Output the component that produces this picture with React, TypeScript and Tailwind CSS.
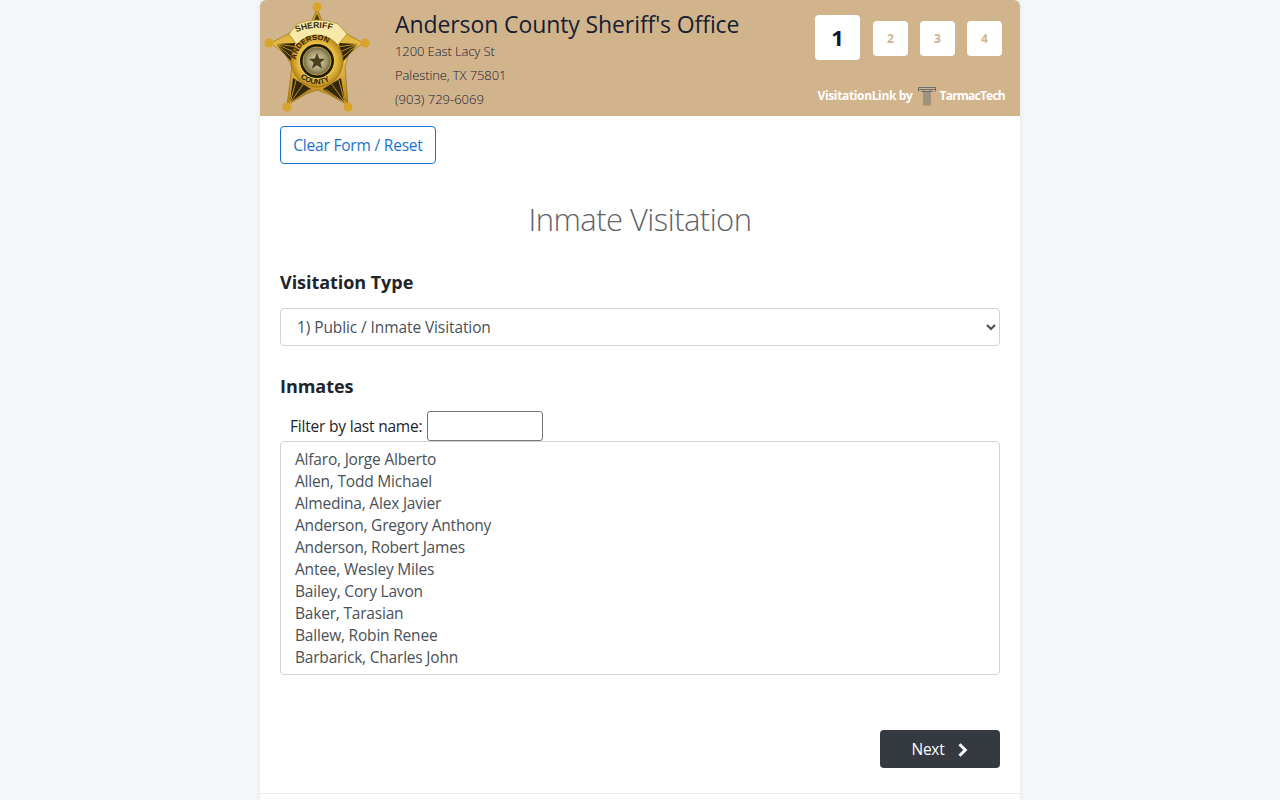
import React from "react";

const font = "font-['Open_Sans',sans-serif]";

const inmates = [
  "Alfaro, Jorge Alberto",
  "Allen, Todd Michael",
  "Almedina, Alex Javier",
  "Anderson, Gregory Anthony",
  "Anderson, Robert James",
  "Antee, Wesley Miles",
  "Bailey, Cory Lavon",
  "Baker, Tarasian",
  "Ballew, Robin Renee",
  "Barbarick, Charles John",
  "Barnes, Larry Joe",
];

const Rays = ({ x, y, angles, len }: { x: number; y: number; angles: number[]; len: number }) => (
  <g stroke="#d9a928" strokeWidth="0.8">
    {angles.map((a) => (
      <line
        key={a}
        x1={x}
        y1={y}
        x2={x + len * Math.cos((a * Math.PI) / 180)}
        y2={y + len * Math.sin((a * Math.PI) / 180)}
      />
    ))}
  </g>
);

const Badge = () => (
  <svg width="108" height="114" viewBox="0 0 108 114" className="shrink-0">
    <defs>
      <radialGradient id="gold" cx="50%" cy="50%" r="55%">
        <stop offset="0%" stopColor="#fff6b8" />
        <stop offset="60%" stopColor="#efc548" />
        <stop offset="100%" stopColor="#a8760f" />
      </radialGradient>
      <linearGradient id="starGold" x1="0" y1="0" x2="0" y2="1">
        <stop offset="0%" stopColor="#c9951f" />
        <stop offset="50%" stopColor="#f0cb55" />
        <stop offset="100%" stopColor="#b07d12" />
      </linearGradient>
      <radialGradient id="seal" cx="50%" cy="50%" r="55%">
        <stop offset="0%" stopColor="#e6dfba" />
        <stop offset="65%" stopColor="#a0956a" />
        <stop offset="100%" stopColor="#5a4f28" />
      </radialGradient>
      <filter id="soft">
        <feGaussianBlur stdDeviation="0.35" />
      </filter>
    </defs>
    <g filter="url(#soft)">
      <path
        d="M55 8 L62 24 L74 27 L101 42 L86 54 L83 66 L86 104 L66 93 L55 89 L44 93 L25 104 L30 66 L24 54 L9 42 L37 27 L48 24 Z"
        fill="url(#starGold)"
        stroke="#8a6410"
        strokeWidth="0.6"
      />
      <path d="M14 43 L33 42 L31 63 Z" fill="#33260a" />
      <path d="M96 43 L77 42 L79 63 Z" fill="#33260a" />
      <path d="M31 77 L49 88 L28 102 Z" fill="#33260a" />
      <path d="M79 77 L61 88 L83 102 Z" fill="#33260a" />
      <path d="M55 13 L60 24 L50 24 Z" fill="#4a3a10" />
      <Rays x={14} y={43} angles={[8, 24, 40]} len={22} />
      <Rays x={96} y={43} angles={[172, 156, 140]} len={22} />
      <Rays x={28} y={102} angles={[-35, -55, -75]} len={24} />
      <Rays x={83} y={102} angles={[-145, -125, -105]} len={24} />
      <circle cx="55" cy="6" r="4.5" fill="#d8a42a" />
      <circle cx="7" cy="42" r="4.5" fill="#d8a42a" />
      <circle cx="103" cy="42" r="4.5" fill="#d8a42a" />
      <circle cx="25" cy="106" r="4.5" fill="#d8a42a" />
      <circle cx="86" cy="106" r="4.5" fill="#d8a42a" />
      <path d="M27 33 L35 23 Q55 15 76 23 L85 33 L76 44 Q55 30 35 44 Z" fill="#f7e9a8" stroke="#a67c14" strokeWidth="0.6" />
      <circle cx="55" cy="60" r="26" fill="url(#gold)" stroke="#9a6f10" strokeWidth="0.8" />
      <circle cx="55" cy="60" r="17" fill="#1f1a0c" />
      <circle cx="55" cy="60" r="14" fill="url(#seal)" stroke="#c9a23a" strokeWidth="1" />
      <path
        d="M55 52 L57.2 57.6 L63 58 L58.5 61.6 L60 67.5 L55 64.2 L50 67.5 L51.5 61.6 L47 58 L52.8 57.6 Z"
        fill="#4a3f1c"
      />
    </g>
    <path id="sheriffArc" d="M33 32 Q55 22 79 32" fill="none" />
    <text fontSize="8.5" fontWeight="700" fill="#3b2a06" fontFamily="'Liberation Sans',sans-serif">
      <textPath href="#sheriffArc" startOffset="3%">SHERIFF</textPath>
    </text>
    <path id="andersonArc" d="M34 60 A21 21 0 0 1 76 60" fill="none" />
    <text fontSize="7.5" fontWeight="700" fill="#2e2105" fontFamily="'Liberation Sans',sans-serif">
      <textPath href="#andersonArc" startOffset="2%">ANDERSON</textPath>
    </text>
    <path id="countyArc" d="M32 66 A24 24 0 0 0 78 66" fill="none" />
    <text fontSize="7.5" fontWeight="700" fill="#2e2105" fontFamily="'Liberation Sans',sans-serif">
      <textPath href="#countyArc" startOffset="20%">COUNTY</textPath>
    </text>
  </svg>
);

const TarmacLogo = () => (
  <svg width="18" height="20" viewBox="0 0 18 20" className="ml-[5px] mr-1">
    <g fill="none" stroke="#6e6e6e" strokeWidth="1">
      <path d="M0.5 1.5 H17.5 M0.5 1.5 V5.5 M17.5 1.5 V5.5 M1 3.5 H17 M3 5.5 H15" />
      <path d="M6 3.5 V19.5 M8 5.5 V19.5 M10 5.5 V19.5 M12 3.5 V19.5" />
    </g>
  </svg>
);

const Step = ({ n }: { n: number }) => (
  <div className="mt-[6px] w-[35px] h-[35px] bg-white rounded flex items-center justify-center text-xs font-bold text-[#d2b48c]">
    {n}
  </div>
);

export default function App() {
  return (
    <div className={`${font} min-h-[800px] h-[800px] overflow-hidden bg-[#f4f8fb] text-[#212529]`}>
      <div className="w-[760px] h-[800px] mx-auto bg-white shadow-[0_0_6px_rgba(0,0,0,0.08)] rounded-t-md">
        <div className="h-[116px] bg-[#d2b48c] rounded-t-md flex relative">
          <div className="w-[135px] pl-[2px] pt-[1px]">
            <Badge />
          </div>
          <div className="text-[#152033]">
            <div className="text-[23px] leading-[30px] pt-[9px] pb-[1px] tracking-[-0.1px]">Anderson County Sheriff's Office</div>
            <div className="text-[13px] leading-6 -mt-[1px] font-light tracking-[-0.1px]">1200 East Lacy St</div>
            <div className="text-[13px] leading-6 font-light tracking-[-0.1px]">Palestine, TX 75801</div>
            <div className="text-[13px] leading-6 font-light">(903) 729-6069</div>
          </div>
          <div className="absolute right-[18px] top-[15px] flex items-start gap-3">
            <div className="mr-[1px] w-[45px] h-[45px] bg-white rounded flex items-center justify-center text-[22px] font-bold text-[#0b1530]">
              1
            </div>
            <Step n={2} />
            <Step n={3} />
            <Step n={4} />
          </div>
          <div className="absolute right-[15px] top-[86px] flex items-center text-white text-xs font-bold tracking-[-0.35px]">
            <span>VisitationLink by</span>
            <TarmacLogo />
            <span className="tracking-[-0.75px]">TarmacTech</span>
          </div>
        </div>

        <div className="px-5">
          <button className="mt-[10px] h-[38px] w-[156px] pt-[2px] border border-[#1a73c9] rounded text-[#1a73c9] text-[15.5px] tracking-[-0.2px]">
            Clear Form / Reset
          </button>

          <h1 className="mt-[33px] text-center text-[31px] leading-[44px] font-light text-[#5f6368] tracking-[-0.55px]">
            Inmate Visitation
          </h1>

          <h2 className="mt-[29px] text-lg leading-6 font-bold tracking-[-0.05px]">Visitation Type</h2>
          <select className="mt-[14px] block w-full h-[38px] pl-3 pr-2 border border-[#ced4da] rounded bg-white text-[15.5px] text-[#495057] tracking-[-0.1px]">
            <option>1) Public / Inmate Visitation</option>
          </select>

          <h2 className="mt-[28px] text-lg leading-6 font-bold tracking-[-0.05px]">Inmates</h2>
          <div className="mt-[13px] pl-[10px] flex items-end text-[15.5px] leading-6 tracking-[-0.2px]">
            <label className="mr-[5px] pb-[3px]">Filter by last name:</label>
            <input className="w-[116px] h-[30px] border border-[#767676] rounded-[3px] bg-white" />
          </div>
          <div className="h-[234px] border border-[#ced4da] rounded pt-[6px] pl-[14px] text-[15.5px] leading-[22px] text-[#495057] tracking-[-0.2px]">
            <div className="h-[224px] overflow-hidden">
              {inmates.map((name) => (
                <div key={name}>{name}</div>
              ))}
            </div>
          </div>

          <div className="mt-[55px] flex justify-end">
            <button className="w-[120px] h-[38px] pt-[1px] bg-[#343a40] rounded text-white text-[15.5px] flex items-center justify-center gap-3 tracking-[-0.3px]">
              Next
              <svg width="12" height="16" viewBox="0 0 12 16">
                <path d="M3.5 2.2 L9.3 8 L3.5 13.8" fill="none" stroke="#fff" strokeWidth="3" />
              </svg>
            </button>
          </div>
        </div>
        <div className="mt-[25px] border-t border-[#e9ecef]" />
      </div>
    </div>
  );
}
